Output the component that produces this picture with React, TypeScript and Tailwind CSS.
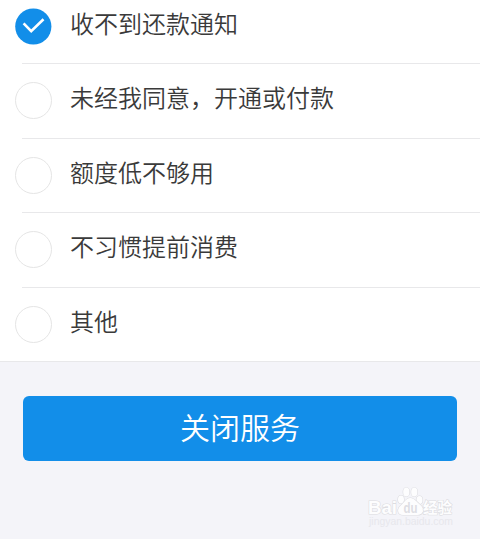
type Reason = { label: string; height: string; checked?: boolean };

const reasons: Reason[] = [
  { label: '收不到还款通知', height: 'h-16 pt-[8px]', checked: true },
  { label: '未经我同意，开通或付款', height: 'h-[75px] pt-[18px]' },
  { label: '额度低不够用', height: 'h-[74px] pt-[18px]' },
  { label: '不习惯提前消费', height: 'h-[75px] pt-[18px]' },
  { label: '其他', height: 'h-[74px] pt-[18px]' },
];

function Radio({ checked }: { checked?: boolean }) {
  if (!checked) {
    return <span className="size-[37px] shrink-0 rounded-full border border-[#e5e5e5] bg-white" />;
  }
  return (
    <svg className="size-[37px] shrink-0" viewBox="0 0 37 37" fill="none">
      <circle cx="18.3" cy="18.5" r="18.1" fill="#128ee9" />
      <path d="M8.6 15.4L16.2 23.2L28.5 11.2" stroke="#fff" strokeWidth="2.6" />
    </svg>
  );
}

function ReasonRow({ reason, last }: { reason: Reason; last: boolean }) {
  return (
    <li className={`relative flex items-start gap-[18px] pl-[15px] ${reason.height}`}>
      <Radio checked={reason.checked} />
      <span className="-mt-px text-2xl leading-[31px] font-[350] text-[#3a3a3a]">{reason.label}</span>
      <span className={`absolute right-0 bottom-0 h-px bg-[#e8e8ea] ${last ? 'left-0' : 'left-[22px]'}`} />
    </li>
  );
}

function Watermark() {
  return (
    <svg
      className="ml-auto mr-[25px] mt-6 h-[46px] w-[90px]"
      viewBox="0 0 90 46"
      fontFamily="'Liberation Sans', 'Noto Sans CJK SC', sans-serif"
    >
      <g fill="#fdfdfe" stroke="#dddde1" strokeWidth="1.2" paintOrder="stroke">
        <text x="3" y="29" fontSize="19" fontWeight="bold" textLength="29" lengthAdjust="spacingAndGlyphs">Bai</text>
        <ellipse cx="36" cy="14.5" rx="3" ry="4" />
        <ellipse cx="41.3" cy="7" rx="3.1" ry="4.5" />
        <ellipse cx="49.3" cy="7" rx="3.1" ry="4.5" />
        <ellipse cx="54.5" cy="15" rx="3" ry="4" />
        <path d="M45.3 13c-4 0-6 4.5-9 7-5 4-4 10 2 10h14c6 0 8-6 3-10-3.5-3-6-7-10-7z" />
        <text x="38.5" y="27.5" fontSize="14" fontWeight="bold" fill="#dedee3" stroke="none" textLength="14" lengthAdjust="spacingAndGlyphs">du</text>
        <text x="58" y="28" fontSize="15" fontWeight="bold" textLength="29" lengthAdjust="spacingAndGlyphs">经验</text>
      </g>
      <text x="4" y="40" fontSize="10" fill="#e7e7ec" textLength="84" lengthAdjust="spacingAndGlyphs">jingyan.baidu.com</text>
    </svg>
  );
}

export default function App() {
  return (
    <main className="flex h-[539px] w-full flex-col overflow-hidden bg-[#f4f4f9] font-['Noto_Sans_CJK_SC',sans-serif]">
      <ul className="bg-white">
        {reasons.map((reason, i) => (
          <ReasonRow key={reason.label} reason={reason} last={i === reasons.length - 1} />
        ))}
      </ul>
      <button className="mt-[34px] mr-[23px] ml-[23px] flex h-[65px] shrink-0 items-center justify-center rounded-md bg-[#128ee9] pb-1.5 text-[30px] leading-none font-[350] text-white">
        关闭服务
      </button>
      <Watermark />
    </main>
  );
}
